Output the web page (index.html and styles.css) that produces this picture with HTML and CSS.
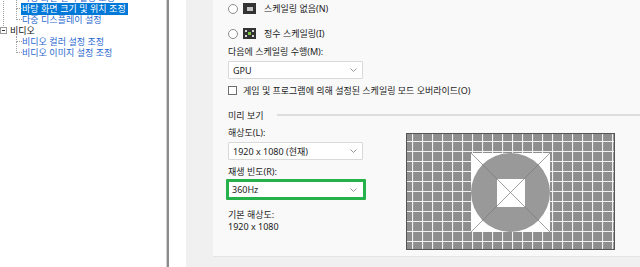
FILE: index.html
```html
<!DOCTYPE html>
<html lang="ko">
<head>
    <meta charset="UTF-8">
    <title>디스플레이 설정</title>
    <link rel="stylesheet" href="styles.css">
</head>
<body>
    <div class="tree">
        <ul class="tree-list">
            <li class="node child"><span class="label">바탕 화면 컬러 설정 조정</span></li>
            <li class="node child"><span class="label selected">바탕 화면 크기 및 위치 조정</span></li>
            <li class="node child"><span class="label">다중 디스플레이 설정</span></li>
            <li class="node root"><span class="toggle"></span><span class="root-label">비디오</span></li>
            <li class="node child first"><span class="label">비디오 컬러 설정 조정</span></li>
            <li class="node child"><span class="label">비디오 이미지 설정 조정</span></li>
        </ul>
    </div>
    <div class="frame-edge"></div>
    <div class="white-strip"></div>
    <div class="gutter"></div>

    <div class="main">
        <div class="panel">
            <div class="radio-row">
                <span class="radio"></span>
                <span class="mode-icon"><span class="mode-none"></span></span>
                <span class="radio-text">스케일링 없음(N)</span>
            </div>
            <div class="radio-row second">
                <span class="radio"></span>
                <span class="mode-icon">
                    <svg width="13" height="11" viewBox="0 0 13 11">
                        <rect x="2" y="2" width="2" height="2" fill="#d8d8d8"/>
                        <rect x="9" y="2" width="2" height="2" fill="#d8d8d8"/>
                        <rect x="2" y="7" width="2" height="2" fill="#d8d8d8"/>
                        <rect x="9" y="7" width="2" height="2" fill="#d8d8d8"/>
                        <rect x="5" y="4" width="3" height="3" fill="#7cc242"/>
                    </svg>
                </span>
                <span class="radio-text">정수 스케일링(I)</span>
            </div>

            <div class="field-label">다음에 스케일링 수행(M):</div>
            <div class="select">
                <span>GPU</span>
                <svg class="chevron" width="7" height="4" viewBox="0 0 7 4"><polyline points="0.5,0.5 3.5,3.5 6.5,0.5" fill="none" stroke="#8a8a8a" stroke-width="0.9"/></svg>
            </div>

            <div class="check-row">
                <span class="checkbox"></span>
                <span>게임 및 프로그램에 의해 설정된 스케일링 모드 오버라이드(O)</span>
            </div>

            <div class="group-head">
                <span>미리 보기</span>
                <span class="group-line"></span>
            </div>

            <div class="preview-area">
                <div class="fields">
                    <div class="field-label">해상도(L):</div>
                    <div class="select">
                        <span>1920 x 1080 (현재)</span>
                        <svg class="chevron" width="7" height="4" viewBox="0 0 7 4"><polyline points="0.5,0.5 3.5,3.5 6.5,0.5" fill="none" stroke="#8a8a8a" stroke-width="0.9"/></svg>
                    </div>
                    <div class="field-label">재생 빈도(R):</div>
                    <div class="select highlight">
                        <span>360Hz</span>
                        <svg class="chevron" width="7" height="4" viewBox="0 0 7 4"><polyline points="0.5,0.5 3.5,3.5 6.5,0.5" fill="none" stroke="#8a8a8a" stroke-width="0.9"/></svg>
                    </div>
                    <div class="field-label native">기본 해상도:</div>
                    <div class="field-value">1920 x 1080</div>
                </div>

                <svg class="preview" width="209" height="117" viewBox="0 0 209 117">
                    <defs>
                        <pattern id="grid" width="10" height="10" x="6" y="8" patternUnits="userSpaceOnUse">
                            <path d="M0 0.5H10M0.5 0V10" stroke="#f2f2f2" stroke-width="1.2" fill="none"/>
                        </pattern>
                    </defs>
                    <rect x="0" y="0" width="209" height="117" fill="#8e8e8e"/>
                    <rect x="0" y="0" width="209" height="117" fill="url(#grid)"/>
                    <rect x="0.5" y="0.5" width="208" height="116" fill="none" stroke="#555" stroke-width="1"/>
                    <rect x="65" y="20" width="79" height="79" fill="#fff"/>
                    <circle cx="104.5" cy="59.5" r="39.5" fill="#999"/>
                    <rect x="91" y="46" width="28" height="28" fill="#fff"/>
                    <line x1="65" y1="20" x2="144" y2="99" stroke="#7a7a7a" stroke-width="0.7"/>
                    <line x1="144" y1="20" x2="65" y2="99" stroke="#7a7a7a" stroke-width="0.7"/>
                </svg>
            </div>
        </div>
    </div>
</body>
</html>
```

FILE: styles.css
```css
* {
    box-sizing: border-box;
}
body {
    margin: 0;
    width: 640px;
    height: 267px;
    overflow: hidden;
    display: flex;
    background: #f0f0f0;
    font-family: "Noto Sans", "Noto Sans CJK KR", sans-serif;
    font-size: 9px;
    color: #1b1b1b;
}

/* 왼쪽 트리 */
.tree {
    width: 167px;
    flex-shrink: 0;
    background: #fff;
    border-right: 1px solid #d0d0d0;
    overflow: hidden;
}
.tree-list {
    list-style: none;
    margin: -8px 0 0 0;
    padding: 0;
    position: relative;
    font-family: "Noto Sans CJK KR", sans-serif;
}
.tree-list::before {
    content: "";
    position: absolute;
    left: 3px;
    top: 0;
    height: 36px;
    border-left: 1px dotted #a0a0a0;
}
.node {
    position: relative;
    height: 11px;
    line-height: 11px;
    white-space: nowrap;
}
.child {
    padding-left: 21px;
}
.child::before {
    content: "";
    position: absolute;
    left: 16px;
    top: -5px;
    width: 5px;
    height: 10px;
    border-left: 1px dotted #a0a0a0;
    border-bottom: 1px dotted #a0a0a0;
}
.child.first::before {
    top: 0;
    height: 5px;
}
.label {
    display: inline-block;
    padding: 0 2px 0 1px;
    color: #1f67cf;
}
.label.selected {
    background: #0078d7;
    color: #fff;
    height: 12px;
    line-height: 12px;
}
.root {
    display: flex;
    align-items: center;
}
.toggle {
    width: 7px;
    height: 7px;
    border: 1px solid #9a9a9a;
    background: #fff;
    position: relative;
    margin-right: 3px;
}
.toggle::after {
    content: "";
    position: absolute;
    left: 1px;
    top: 2px;
    width: 3px;
    height: 1px;
    background: #333;
}
.root-label {
    color: #111;
}

.frame-edge {
    width: 2px;
    flex-shrink: 0;
    background: #8c8c8c;
}
.white-strip {
    width: 17px;
    flex-shrink: 0;
    background: #fff;
}
.gutter {
    width: 27px;
    flex-shrink: 0;
}

/* 오른쪽 설정 패널 */
.main {
    flex: 1;
}
.panel {
    height: 257px;
    background: #f9f9f9;
    border-bottom: 1px solid #e4e4e4;
    padding-left: 15px;
    padding-top: 2px;
}
.radio-row {
    display: flex;
    align-items: center;
    height: 13px;
}
.radio-row.second {
    margin-top: 12px;
}
.radio {
    width: 10px;
    height: 10px;
    border: 1px solid #8d8d8d;
    border-radius: 50%;
    background: #fff;
}
.mode-icon {
    width: 13px;
    height: 11px;
    margin-left: 5px;
    background: #333;
    display: flex;
    align-items: center;
    justify-content: center;
}
.mode-icon svg {
    display: block;
}
.mode-none {
    width: 6px;
    height: 4px;
    background: #c4c4c4;
}
.radio-text {
    margin-left: 8px;
}
.field-label {
    height: 12px;
    line-height: 12px;
    margin-top: 6px;
}
.select {
    width: 135px;
    height: 18px;
    margin-top: 3px;
    background: #fff;
    border: 1px solid #d9d9d9;
    border-radius: 1px;
    padding: 0 5px 0 4px;
    display: flex;
    align-items: center;
    justify-content: space-between;
}
.select.highlight {
    width: 140px;
    height: 21px;
    margin-top: 1px;
    margin-left: -2px;
    border: 3px solid #27b14a;
    padding: 0 6px 0 3px;
}
.check-row {
    display: flex;
    align-items: center;
    height: 12px;
    margin-top: 5px;
}
.checkbox {
    width: 9px;
    height: 9px;
    border: 1px solid #6e6e6e;
    background: #fff;
    margin-right: 6px;
}
.group-head {
    display: flex;
    align-items: center;
    height: 12px;
    margin-top: 13px;
}
.group-line {
    flex: 1;
    height: 2px;
    margin-left: 14px;
    background: #dddddd;
}
.preview-area {
    display: flex;
    margin-top: 6px;
}
.fields {
    width: 138px;
}
.preview-area .fields > .field-label:first-child {
    margin-top: 0;
}
.field-label.native {
    margin-top: 9px;
}
.field-value {
    height: 12px;
    line-height: 12px;
}
.preview {
    display: block;
    margin-left: 40px;
    margin-top: 6px;
}
```
